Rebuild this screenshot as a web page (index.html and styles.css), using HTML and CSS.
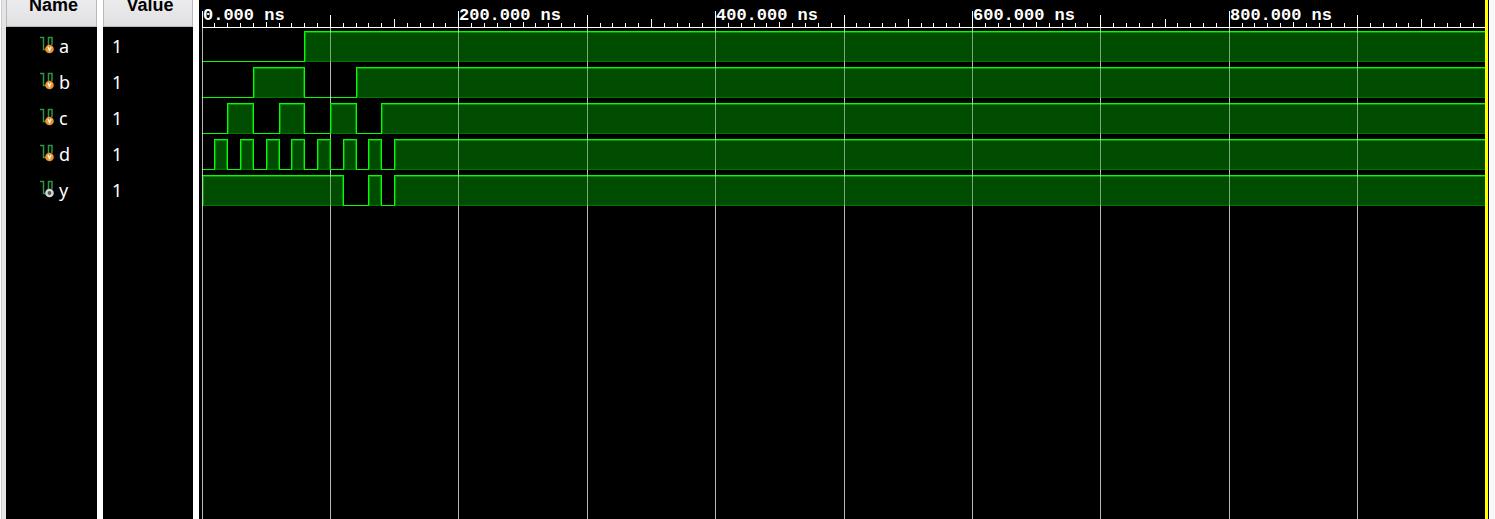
FILE: index.html
```html
<!DOCTYPE html>
<html lang="en">
<head>
<meta charset="utf-8">
<title>Waveform</title>
<link rel="stylesheet" href="styles.css">
</head>
<body>
<svg class="defs" aria-hidden="true">
  <defs>
    <path id="wire" class="wire" d="M0 1.5H3.5V13.5H8.5V1.5H12V9"/>
    <g id="variable"><use href="#wire"/><circle class="var" cx="9.5" cy="13" r="4.3"/><path class="mark" d="M8 11L9.5 14.5L11 11"/></g>
    <g id="net"><use href="#wire"/><circle class="net" cx="9.5" cy="13" r="3.1"/></g>
  </defs>
</svg>
<main class="viewer">
  <section class="column names">
    <h2 class="head">Name</h2>
    <ul class="rows">
      <li class="row"><svg class="icon" viewBox="0 0 16 20"><use href="#variable"/></svg>a</li>
      <li class="row"><svg class="icon" viewBox="0 0 16 20"><use href="#variable"/></svg>b</li>
      <li class="row"><svg class="icon" viewBox="0 0 16 20"><use href="#variable"/></svg>c</li>
      <li class="row"><svg class="icon" viewBox="0 0 16 20"><use href="#variable"/></svg>d</li>
      <li class="row"><svg class="icon" viewBox="0 0 16 20"><use href="#net"/></svg>y</li>
    </ul>
  </section>
  <section class="column values">
    <h2 class="head">Value</h2>
    <ul class="rows">
      <li class="row">1</li>
      <li class="row">1</li>
      <li class="row">1</li>
      <li class="row">1</li>
      <li class="row">1</li>
    </ul>
  </section>
  <section class="waves"><svg class="plot" id="plot" role="img" aria-label="Signal waveforms"></svg></section>
</main>
<script src="waves.js"></script>
</body>
</html>
```
FILE: styles.css
```css
* { box-sizing: border-box; }
body { margin: 0; background: #fff; }
.defs { position: absolute; width: 0; height: 0; }
.viewer {
  display: flex;
  gap: 6px;
  height: 100vh;
  padding-right: 6px;
  padding-left: 2px;
  overflow: hidden;
  background: linear-gradient(to left, #f8f8f8 5px, #fff 5px);
}
.column { flex: none; background: #000; }
.names { width: 95px; border-left: 4px solid #e5e5e5; box-shadow: -1px 0 #ccc; }
.values { width: 90px; }
.head {
  display: flex;
  align-items: flex-end;
  justify-content: center;
  height: 27px;
  margin: 0;
  padding-bottom: 11px;
  padding-left: 4px;
  border: solid #b8b8b8;
  border-width: 0 1px 1px;
  background: linear-gradient(#ececee, #e0e0e2);
  color: #000;
  font: bold 18px/20px "Liberation Sans", Arial, sans-serif;
}
.rows { margin: 0; padding: 1px 0 0; list-style: none; }
.row {
  display: flex;
  align-items: center;
  height: 36px;
  color: #fff;
  font: 18px/24px "Noto Sans", sans-serif;
}
.names .row { gap: 3px; padding-left: 34px; }
.values .row { padding-left: 9px; }
.icon { width: 16px; height: 20px; }
.wire { fill: none; stroke: #2f9446; stroke-width: 1.5; }
.var { fill: #ee922c; }
.mark { fill: none; stroke: #fff; stroke-width: 1.2; }
.net { fill: #555; stroke: #d4d4d4; stroke-width: 2.4; }
.waves {
  flex: 1;
  min-width: 0;
  padding-left: 3px;
  border-right: 1px solid #000;
  background: #000;
}
.plot { display: block; width: 100%; height: 100%; border-right: 3px solid #ff0; shape-rendering: crispEdges; }
.plot text { fill: #fff; font: bold 17px "Liberation Mono", monospace; }
.axis { fill: #fff; }
.grid { fill: #fff; fill-opacity: .72; }
.grid-over { fill: #fff; fill-opacity: .5; }
.high { fill: #004c00; }
.shade { fill: #009400; }
.base { fill: #007400; }
.line { fill: #0f0; }
```
FILE: waves.js
```js
const plot = document.getElementById('plot');
const END = 1000;
const TOP = 31;
const PITCH = 36;
const AMPLITUDE = 30;

// Intervals, in ns, during which each signal is high.
const signals = [
  [[80, END]],
  [[40, 80], [120, END]],
  [[20, 40], [60, 80], [100, 120], [140, END]],
  [[10, 20], [30, 40], [50, 60], [70, 80], [90, 100], [110, 120], [130, 140], [150, END]],
  [[0, 110], [130, 140], [150, END]]
];

// Ticks that fall under a time label stop short of it.
function tickTop(t) {
  if (t % 200 === 0) return 11;
  if (t % 100 === 0) return 15;
  if (t % 200 === 50) return 22;
  return t % 50 === 0 ? 19 : 23;
}

function draw() {
  const width = plot.clientWidth;
  const height = plot.clientHeight;
  const x = t => Math.floor((width + 1) * t / END);
  const parts = [];
  const rect = (cls, left, top, w, h) =>
    parts.push(`<rect class="${cls}" x="${left}" y="${top}" width="${w}" height="${h}"/>`);

  signals.forEach((spans, i) => {
    const y = TOP + i * PITCH;
    const bottom = y + AMPLITUDE;
    rect('line', 0, bottom, width, 1);
    for (const [from, to] of spans) {
      const a = x(from);
      const b = x(to);
      rect('high', a, y, b - a, AMPLITUDE);
      rect('shade', a + 1, y + 1, b - a - 1, 1);
      rect('shade', a + 1, y + 1, 1, AMPLITUDE);
      if (to < END) rect('shade', b - 1, y + 1, 1, AMPLITUDE);
      rect('base', a + 1, bottom, b - a - 1, 1);
      rect('line', a, y, b - a + 1, 1);
      if (from > 0) rect('line', a, y, 1, AMPLITUDE + 1);
      if (to < END) rect('line', b, y, 1, AMPLITUDE + 1);
      for (let t = 0; t < END; t += 100) {
        if (t > from && t < to) rect('grid-over', x(t), y, 1, AMPLITUDE + 1);
      }
    }
  });

  // Grid lines show through the gaps between signals and below them.
  for (let t = 0; t < END; t += 100) {
    signals.forEach((spans, i) => {
      const y = TOP + i * PITCH;
      const covered = spans.some(([from, to]) => t >= from && t <= to && t > 0);
      rect('grid', x(t), y - 5, 1, 5);
      if (!covered) rect('grid', x(t), y, 1, AMPLITUDE + 1);
    });
    const below = TOP + signals.length * PITCH - 5;
    rect('grid', x(t), below, 1, height - below);
  }

  rect('axis', 0, 27, width, 1);
  for (let t = 0; t < END; t += 10) {
    const top = tickTop(t);
    rect('axis', x(t), top, 1, 28 - top);
  }
  for (let t = 0; t < END; t += 200) {
    parts.push(`<text x="${x(t) + 1}" y="20">${t}.000 ns</text>`);
  }
  plot.innerHTML = parts.join('');
}

draw();
window.addEventListener('resize', draw);
```
